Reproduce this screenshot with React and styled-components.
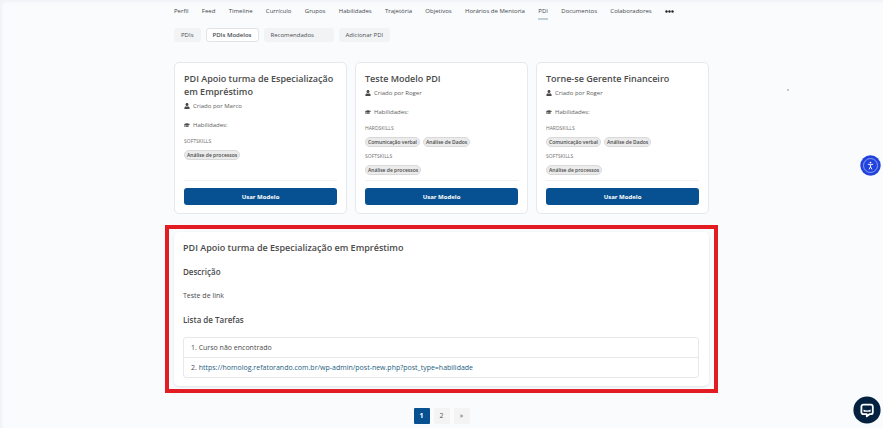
import React from "react";
import styled, { createGlobalStyle } from "styled-components";
import { FaUser, FaGraduationCap } from "react-icons/fa";

const GlobalStyle = createGlobalStyle`
  * { box-sizing: border-box; }
  body {
    margin: 0;
    background: #fafbfd;
    color: #4a4a4a;
    font-family: "Open Sans", "Noto Sans", sans-serif;
    font-size: 7px;
    line-height: 10px;
  }
  button { font-family: inherit; cursor: pointer; }
  h2, h3, h4, p, ul, ol { margin: 0; padding: 0; }
`;

const Page = styled.div`
  min-height: 100vh;
  padding: 0 16px;
  box-shadow: inset 2px 2px 3px #f1f2f6;
`;

const Container = styled.main`
  max-width: 535px;
  margin: 0 auto;
  position: relative;
`;

const Nav = styled.nav`
  display: flex;
  justify-content: space-between;
  align-items: flex-start;
  max-width: 500px;
  padding-top: 5px;
`;

const NavLink = styled.a`
  color: #44484c;
  font-size: 6px;
  line-height: 12px;
  padding-bottom: 1px;
  text-decoration: none;
  white-space: nowrap;
  border-bottom: 2px solid ${(p) => (p.$active ? "#c0d0da" : "transparent")};
`;

const MoreButton = styled.button`
  display: flex;
  align-items: center;
  height: 12px;
  padding: 0;
  border: 0;
  background: none;
`;

const Tabs = styled.div`
  display: flex;
  gap: 5px;
  margin-top: 8px;
`;

const Tab = styled.button`
  height: 14px;
  padding: 0 6px;
  min-width: ${(p) => (p.$wide ? "70px" : "0")};
  border: 1px solid ${(p) => (p.$active ? "#e2e3e5" : "#f2f3f5")};
  border-radius: 3px;
  background: ${(p) => (p.$active ? "#fff" : "#f2f3f5")};
  color: #4a4e52;
  font-size: 6px;
  font-weight: ${(p) => (p.$active ? 600 : 500)};
  line-height: 12px;
  text-align: left;
`;

const Cards = styled.section`
  display: grid;
  grid-template-columns: repeat(3, minmax(0, 1fr));
  gap: 8px;
  margin-top: 20px;
`;

const Card = styled.article`
  display: flex;
  flex-direction: column;
  min-height: 152px;
  padding: 9px 9px 8px;
  border: 1px solid #e6e8eb;
  border-radius: 5px;
  background: #fff;
`;

const CardTitle = styled.h2`
  color: #4b4b4b;
  font-size: 9px;
  font-weight: 600;
  line-height: 13px;
`;

const Meta = styled.p`
  display: flex;
  align-items: center;
  gap: 3px;
  margin-top: ${(p) => (p.$spaced ? "9px" : "3px")};
  color: #606060;
  font-size: 6px;
  line-height: 10px;

  svg { width: 6px; height: 6px; color: #4a4a4a; }
`;

const Skills = styled.div`
  display: grid;
  gap: 5px;
  margin-top: 7px;
`;

const SkillLabel = styled.h3`
  color: #707070;
  font-size: 5px;
  font-weight: 400;
  line-height: 8px;
`;

const Tags = styled.ul`
  display: flex;
  gap: 3px;
  margin-top: 5px;
  list-style: none;
`;

const Tag = styled.li`
  padding: 0 2px;
  border: 1px solid #d9d9da;
  border-radius: 5px;
  background: #ebebec;
  color: #4a4a4a;
  font-size: 5px;
  font-weight: 600;
  line-height: 8px;
  white-space: nowrap;
`;

const CardFooter = styled.div`
  margin-top: auto;
  padding-top: 7px;
  border-top: 1px solid #f0f1f2;
`;

const PrimaryButton = styled.button`
  display: block;
  width: 100%;
  height: 17px;
  padding: 0;
  border: 0;
  border-radius: 3px;
  background: #075192;
  color: #fff;
  font-size: 6px;
  font-weight: 700;
`;

const Highlight = styled.section`
  margin: 11px -9px 0;
  padding: 3px 5px;
  border: 4px solid #e31b23;
  background: #fafbfd;
`;

const Panel = styled.div`
  padding: 9px 10px 8px 9px;
  border-radius: 5px;
  background: #fff;
  box-shadow: 0 1px 3px #dfe2e6;
`;

const PanelTitle = styled.h2`
  color: #4b4b4b;
  font-size: 9px;
  font-weight: 600;
  line-height: 14px;
`;

const PanelHeading = styled.h3`
  margin-top: 10px;
  color: #4b4b4b;
  font-size: 8px;
  font-weight: 600;
  line-height: 14px;
`;

const PanelText = styled.p`
  margin-top: 10px;
  color: #4a4a4a;
  line-height: 14px;
`;

const TaskList = styled.ol`
  margin-top: 10px;
  border: 1px solid #e7e8ea;
  border-radius: 3px;
  list-style: none;
`;

const Task = styled.li`
  padding: 0 7px;
  line-height: 19px;

  & + & { border-top: 1px solid #e7e8ea; }
  a { color: #24607f; text-decoration: none; }
`;

const Pagination = styled.nav`
  display: flex;
  justify-content: center;
  gap: 4px;
  margin-top: 15px;
`;

const PageLink = styled.a`
  width: 16px;
  border-radius: 1px;
  background: ${(p) => (p.$active ? "#075192" : "#f4f4f5")};
  color: ${(p) => (p.$active ? "#fff" : "#555")};
  font-size: 7px;
  font-weight: ${(p) => (p.$active ? 700 : 400)};
  line-height: 16px;
  text-align: center;
  text-decoration: none;
`;

const FloatingButton = styled.button`
  position: fixed;
  right: 2px;
  ${(p) => (p.$corner ? "bottom: 4px;" : "top: 155px;")}
  display: flex;
  padding: 0;
  border: 0;
  border-radius: 50%;
  background: none;
`;

const Speck = styled.span`
  position: absolute;
  top: 89px;
  left: 613px;
  width: 2px;
  height: 2px;
  border-radius: 50%;
  background: #b5b7ba;
`;

const navItems = [
  "Perfil", "Feed", "Timeline", "Currículo", "Grupos", "Habilidades",
  "Trajetória", "Objetivos", "Horários de Mentoria", "PDI", "Documentos",
  "Colaboradores",
];

const tabs = ["PDIs", "PDIs Modelos", "Recomendados", "Adicionar PDI"];

const roger = [
  { label: "HARDSKILLS", tags: ["Comunicação verbal", "Análise de Dados"] },
  { label: "SOFTSKILLS", tags: ["Análise de processos"] },
];

const models = [
  {
    title: "PDI Apoio turma de Especialização em Empréstimo",
    author: "Marco",
    skills: [{ label: "SOFTSKILLS", tags: ["Análise de processos"] }],
  },
  { title: "Teste Modelo PDI", author: "Roger", skills: roger },
  { title: "Torne-se Gerente Financeiro", author: "Roger", skills: roger },
];

function ModelCard({ title, author, skills }) {
  return (
    <Card>
      <CardTitle>{title}</CardTitle>
      <Meta><FaUser />Criado por {author}</Meta>
      <Meta $spaced><FaGraduationCap />Habilidades:</Meta>
      <Skills>
        {skills.map((group) => (
          <div key={group.label}>
            <SkillLabel>{group.label}</SkillLabel>
            <Tags>{group.tags.map((t) => <Tag key={t}>{t}</Tag>)}</Tags>
          </div>
        ))}
      </Skills>
      <CardFooter><PrimaryButton>Usar Modelo</PrimaryButton></CardFooter>
    </Card>
  );
}

export default function App() {
  return (
    <Page>
      <GlobalStyle />
      <Container>
        <Nav>
          {navItems.map((n) => (
            <NavLink key={n} href="#" $active={n === "PDI"}>{n}</NavLink>
          ))}
          <MoreButton aria-label="Mais">
            <svg width="9" height="3" viewBox="0 0 9 3" fill="#222">
              <circle cx="1.5" cy="1.5" r="1.2" />
              <circle cx="4.5" cy="1.5" r="1.2" />
              <circle cx="7.5" cy="1.5" r="1.2" />
            </svg>
          </MoreButton>
        </Nav>
        <Tabs>
          {tabs.map((t) => (
            <Tab key={t} $active={t === "PDIs Modelos"} $wide={t === "Recomendados"}>{t}</Tab>
          ))}
        </Tabs>
        <Cards>
          {models.map((m) => <ModelCard key={m.title} {...m} />)}
        </Cards>
        <Highlight>
          <Panel>
            <PanelTitle>PDI Apoio turma de Especialização em Empréstimo</PanelTitle>
            <PanelHeading>Descrição</PanelHeading>
            <PanelText>Teste de link</PanelText>
            <PanelHeading>Lista de Tarefas</PanelHeading>
            <TaskList>
              <Task>1. Curso não encontrado</Task>
              <Task>
                2. <a href="#">https://homolog.refatorando.com.br/wp-admin/post-new.php?post_type=habilidade</a>
              </Task>
            </TaskList>
          </Panel>
        </Highlight>
        <Pagination aria-label="Páginas">
          <PageLink href="#" $active>1</PageLink>
          <PageLink href="#">2</PageLink>
          <PageLink href="#">»</PageLink>
        </Pagination>
        <Speck />
      </Container>
      <FloatingButton aria-label="Acessibilidade">
        <svg width="21" height="21" viewBox="0 0 21 21" fill="none">
          <circle cx="10.5" cy="10.5" r="10.2" fill="#2143dc" />
          <circle cx="10.5" cy="10.5" r="7" stroke="#a9b6f6" strokeWidth="0.8" />
          <circle cx="10.5" cy="7.6" r="0.9" fill="#fff" />
          <path d="M8.2 9.3l2.3.5 2.3-.5M10.5 9.8v2M10.5 11.6l-1.2 2.4M10.5 11.6l1.2 2.4" stroke="#fff" strokeWidth="0.9" strokeLinecap="round" />
        </svg>
      </FloatingButton>
      <FloatingButton $corner aria-label="Chat">
        <svg width="28" height="28" viewBox="0 0 28 28" fill="none">
          <circle cx="14" cy="14" r="13.6" fill="#04223f" />
          <path d="M10.4 8.6h7.4a2 2 0 0 1 2 2v5.6a2 2 0 0 1-2 2h-1.4L13.8 20.4v-2.2h-3.4a2 2 0 0 1-2-2v-5.6a2 2 0 0 1 2-2z" stroke="#fff" strokeWidth="1.8" strokeLinejoin="round" />
          <path d="M10.6 13.4c2 1.3 5 1.3 7 0v2.4h-7z" fill="#fff" />
        </svg>
      </FloatingButton>
    </Page>
  );
}
